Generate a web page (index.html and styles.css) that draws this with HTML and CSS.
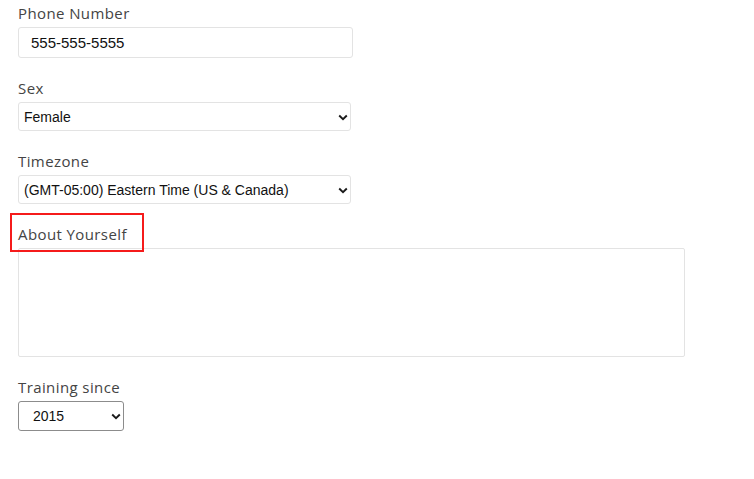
FILE: index.html
```html
<!DOCTYPE html>
<html lang="en">
<head>
<meta charset="utf-8">
<title>Profile form</title>
<link rel="stylesheet" href="styles.css">
</head>
<body>
<form class="form">
  <div class="group">
    <label class="label" for="phone">Phone Number</label>
    <input class="input" id="phone" type="text" value="555-555-5555">
  </div>
  <div class="group">
    <label class="label" for="sex">Sex</label>
    <div class="select-wrap select-wide">
      <select class="select" id="sex"><option>Female</option><option>Male</option></select>
      <svg class="chev" width="10" height="7" viewBox="0 0 10 7"><path d="M1.2 1.5l3.8 3.6L8.8 1.5" fill="none" stroke="#1a1a1a" stroke-width="1.9"/></svg>
    </div>
  </div>
  <div class="group">
    <label class="label" for="tz">Timezone</label>
    <div class="select-wrap select-wide">
      <select class="select" id="tz"><option>(GMT-05:00) Eastern Time (US &amp; Canada)</option></select>
      <svg class="chev" width="10" height="7" viewBox="0 0 10 7"><path d="M1.2 1.5l3.8 3.6L8.8 1.5" fill="none" stroke="#1a1a1a" stroke-width="1.9"/></svg>
    </div>
  </div>
  <div class="group">
    <label class="label" for="about"><span class="highlight">About Yourself</span></label>
    <textarea class="textarea" id="about"></textarea>
  </div>
  <div class="group">
    <label class="label" for="year">Training since</label>
    <div class="select-wrap select-year">
      <select class="select select-bordered" id="year"><option>2015</option></select>
      <svg class="chev" width="10" height="7" viewBox="0 0 10 7"><path d="M1.2 1.5l3.8 3.6L8.8 1.5" fill="none" stroke="#1a1a1a" stroke-width="1.9"/></svg>
    </div>
  </div>
</form>
</body>
</html>
```
FILE: styles.css
```css
html, body {
  margin: 0;
  background: #ffffff;
}
body {
  padding: 3px 0 0 18px;
  font-family: "Open Sans", "Lato", sans-serif;
}
.form {
  display: flex;
  flex-direction: column;
  gap: 20px;
}
.group {
  display: flex;
  flex-direction: column;
  align-items: flex-start;
  gap: 4px;
}
.label {
  font-size: 15px;
  line-height: 20px;
  letter-spacing: 0.4px;
  color: #444444;
}
.highlight {
  position: relative;
}
.highlight::after {
  content: "";
  position: absolute;
  left: -8px;
  top: -11px;
  width: 130px;
  height: 35px;
  border: 2px solid #f51b1b;
  pointer-events: none;
}
.input {
  box-sizing: border-box;
  width: 335px;
  height: 31px;
  margin: 0;
  padding: 0 12px;
  border: 1px solid #e3e3e3;
  border-radius: 3px;
  font-family: "Liberation Sans", Arial, sans-serif;
  font-size: 15px;
  color: #111;
  outline: none;
}
.select-wrap {
  position: relative;
  display: block;
}
.select-wide {
  width: 333px;
}
.select-year {
  width: 106px;
}
.select {
  box-sizing: border-box;
  appearance: none;
  -webkit-appearance: none;
  width: 100%;
  height: 29px;
  margin: 0;
  padding: 0 24px 0 5px;
  border: 1px solid #e3e3e3;
  border-radius: 3px;
  background: #fff;
  font-family: "Liberation Sans", Arial, sans-serif;
  font-size: 14px;
  color: #111;
  outline: none;
}
.select-bordered {
  height: 30px;
  padding-left: 14px;
  border-color: #8c8c8c;
}
.chev {
  position: absolute;
  right: 3px;
  top: 50%;
  margin-top: -3px;
  pointer-events: none;
}
.textarea {
  box-sizing: border-box;
  width: 667px;
  height: 109px;
  margin: 0;
  padding: 6px;
  border: 1px solid #e3e3e3;
  border-radius: 2px;
  resize: none;
  outline: none;
  font-family: "Liberation Sans", Arial, sans-serif;
}
```
